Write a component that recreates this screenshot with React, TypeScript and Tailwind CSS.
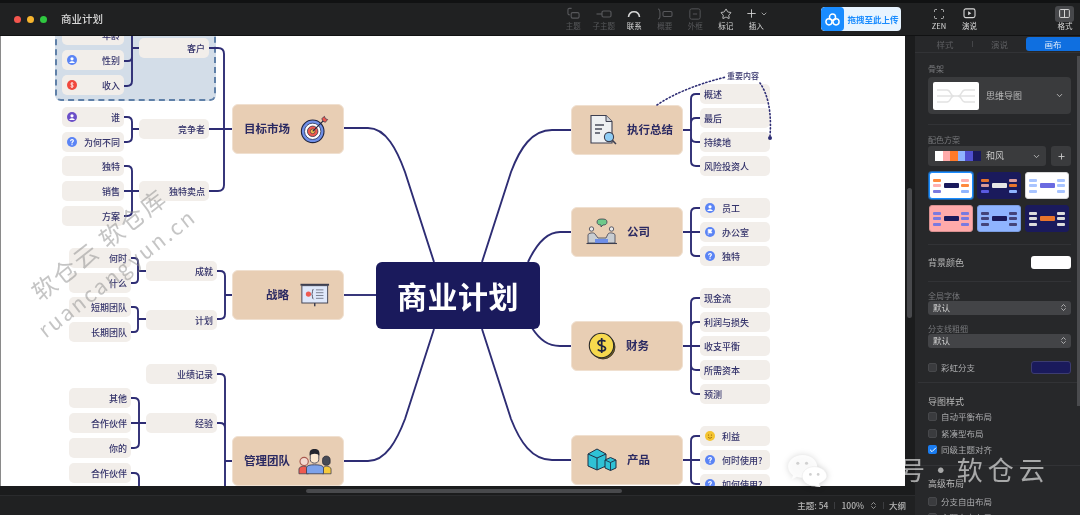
import React from 'react';
import { Star, Plus, ChevronDown, Scan, ChevronsUpDown, Check } from 'lucide-react';

const INK = '#2e2d74';

function Spot({ kind }: { kind: 'user' | 'ask' | 'money' | 'flag' | 'smile' | 'who' }) {
  const fill = { user: '#5b84f5', ask: '#5b84f5', money: '#f0483e', flag: '#5b84f5', smile: '#f4c430', who: '#6b4fc8' }[kind];
  return (
    <svg viewBox="0 0 10 10" className="w-[10px] h-[10px] shrink-0">
      <circle cx="5" cy="5" r="5" fill={fill} />
      {(kind === 'user' || kind === 'who') && (
        <>
          <circle cx="5" cy="3.8" r="1.6" fill="#fff" />
          <path d="M2.2 8 C2.6 5.8 7.4 5.8 7.8 8 Z" fill="#fff" />
        </>
      )}
      {kind === 'ask' && <path d="M3.6 3.8 C3.8 2.2 6.4 2.2 6.4 3.8 C6.4 4.8 5 4.8 5 6 M5 7.3 V7.8" stroke="#fff" strokeWidth="1.1" fill="none" strokeLinecap="round" />}
      {kind === 'money' && <path d="M6.4 3.4 C5.6 2.6 3.8 2.8 3.8 4 C3.8 5.3 6.3 4.8 6.3 6.1 C6.3 7.3 4.3 7.4 3.6 6.6 M5 2.2 V7.9" stroke="#fff" strokeWidth="0.8" fill="none" />}
      {kind === 'flag' && <path d="M3.2 2.6 H7 L6 4.3 L7 6 H3.8 Z M3.2 2.6 V8" fill="#fff" stroke="#fff" strokeWidth="0.6" />}
      {kind === 'smile' && (
        <>
          <circle cx="3.5" cy="4" r="0.6" fill="#8a5a00" />
          <circle cx="6.5" cy="4" r="0.6" fill="#8a5a00" />
          <path d="M3 6 C4 7.6 6 7.6 7 6" stroke="#8a5a00" strokeWidth="0.7" fill="none" />
        </>
      )}
    </svg>
  );
}

function Leaf({ text, w, right, icon }: { text?: string; w: string; right?: boolean; icon?: React.ComponentProps<typeof Spot>['kind'] }) {
  return (
    <div className={`${w} h-[20px] shrink-0 rounded-[5px] bg-[#f2eeea] flex items-center text-[9px] font-medium text-[#33326a] ${right ? (icon ? 'pl-[5px]' : 'pl-[4px]') : 'pl-[5px] pr-[4px]'}`}>
      {icon && <Spot kind={icon} />}
      <span className={`${right ? (icon ? 'ml-[7px]' : '') : 'ml-auto'} whitespace-nowrap leading-none`}>{text}</span>
    </div>
  );
}

function Main({ text, className, children, iconFirst }: { text: string; className: string; children: React.ReactNode; iconFirst?: boolean }) {
  return (
    <div className={`absolute w-[112px] h-[50px] rounded-[6px] bg-[#e8ceb4] border border-[#f0e0d0] flex items-center text-[11.5px] font-bold text-[#2b2a62] ${className}`}>
      {iconFirst ? children : null}
      <span className="whitespace-nowrap">{text}</span>
      {iconFirst ? null : children}
    </div>
  );
}

function Lines() {
  return (
    <svg viewBox="1 36 904 450" className="absolute inset-0 w-[904px] h-[450px]" fill="none" stroke={INK} strokeWidth="1.9">
      {/* center */}
      <path d="M344 128 H368 C386 128 397 150 405 172 L434 262" />
      <path d="M482 262 L511 172 C520 148 532 130 552 130 H571" />
      <path d="M528 262 C536 245 546 232 560 232 H571" />
      <path d="M532 328 C540 340 548 346 560 346 H571" />
      <path d="M344 295 H376" />
      <path d="M344 461 H368 C386 461 397 440 405 419 L434 329" />
      <path d="M482 329 L511 419 C520 442 532 460 552 460 H571" />
      {/* right side */}
      <path d="M683 130 H691 M700 94 H696 Q691 94 691 99 V161 Q691 166 696 166 H700 M700 118 H696 Q691 118 691 123 M700 142 H696 Q691 142 691 137" />
      <path d="M683 232 H700 M700 208 H696 Q691 208 691 213 V251 Q691 256 696 256 H700" />
      <path d="M683 346 H700 M700 298 H696 Q691 298 691 303 V389 Q691 394 696 394 H700 M700 322 H696 Q691 322 691 327 M700 370 H696 Q691 370 691 365" />
      <path d="M683 460 H700 M700 436 H696 Q691 436 691 441 V479 Q691 484 696 484 H700" />
      {/* left side */}
      <path d="M209 48 H218 Q224 48 224 54 V185 Q224 191 218 191 H209 M209 129 H232" />
      <path d="M132 48 H139 M123 61 H128 Q132 61 132 57 M123 86 H127 Q132 86 132 81 V36" />
      <path d="M123 117 H127 Q132 117 132 122 V137 Q132 142 127 142 H123 M132 129 H139" />
      <path d="M123 166 H127 Q132 166 132 171 V211 Q132 216 127 216 H123 M123 191 H139" />
      <path d="M216 271 H220 Q225 271 225 276 V314 Q225 319 220 319 H216 M225 295 H232" />
      <path d="M130 258 H134 Q138 258 138 262 V279 Q138 283 134 283 H130 M138 271 H146" />
      <path d="M130 307 H134 Q138 307 138 311 V328 Q138 332 134 332 H130 M138 319 H146" />
      <path d="M216 374 H220 Q225 374 225 379 V486 M216 423 H220 Q225 423 225 428 M225 461 H232" />
      <path d="M130 398 H134 Q139 398 139 403 V443 Q139 448 134 448 H130 M130 423 H146 M130 473 H134 Q139 473 139 478 V486" />
    </svg>
  );
}

// dotted callout runs over the leaves, so it sits in its own layer
function Callout() {
  return (
    <svg viewBox="1 36 904 450" className="absolute inset-0 w-[904px] h-[450px]" fill="none" stroke={INK}>
      <path d="M657 105 C670 96 693 85 726 77 M760 83 C767 93 772 110 770 136" strokeWidth="1.6" strokeDasharray="1.2 2.4" strokeLinecap="round" />
      <circle cx="770" cy="138" r="2" fill={INK} stroke="none" />
    </svg>
  );
}

function TargetIcon() {
  return (
    <svg viewBox="0 0 32 32" className="w-[29px] h-[29px] shrink-0">
      <circle cx="14" cy="18" r="12.5" fill="#6f8fe8" stroke="#1f2440" strokeWidth="1.2" />
      <circle cx="14" cy="18" r="9" fill="#fff" stroke="#1f2440" strokeWidth="0.8" />
      <circle cx="14" cy="18" r="5.8" fill="#ef5a50" stroke="#1f2440" strokeWidth="0.8" />
      <circle cx="14" cy="18" r="2.6" fill="#f2c14e" stroke="#1f2440" strokeWidth="0.6" />
      <path d="M14 18 L27 5" stroke="#1f2440" strokeWidth="1.2" />
      <path d="M24 4 L27 1.5 L28 4 L30.5 5 L28 8 L25.5 7 Z" fill="#ef5a50" stroke="#1f2440" strokeWidth="0.7" />
    </svg>
  );
}

function DocIcon() {
  return (
    <svg viewBox="0 0 28 32" className="w-[28px] h-[32px] shrink-0">
      <path d="M2 1.5 H17 L23 7.5 V29 H2 Z" fill="#eef0f2" stroke="#3d3f50" strokeWidth="1.1" />
      <path d="M17 1.5 V7.5 H23" fill="#cfd3d8" stroke="#3d3f50" strokeWidth="1" />
      <path d="M6 11 H15 M6 15 H13 M6 19 H11" stroke="#4a4c5c" strokeWidth="1.3" />
      <circle cx="20" cy="23" r="4.6" fill="#8fcdf5" stroke="#3d3f50" strokeWidth="1.1" />
      <path d="M23.4 26.4 L27 30" stroke="#3d3f50" strokeWidth="1.5" />
    </svg>
  );
}

function MeetIcon() {
  return (
    <svg viewBox="0 0 32 28" className="w-[32px] h-[28px] shrink-0">
      <path d="M11 4 C11 1.5 13 1 16 1 C19 1 21 1.5 21 4 C21 6.5 19 7 17 7 L15 9 L15 7 C13 7 11 6.5 11 4 Z" fill="#6fc98a" stroke="#3d3f50" strokeWidth="0.8" />
      <circle cx="5.5" cy="11" r="2.2" fill="#e8e8e8" stroke="#3d3f50" strokeWidth="0.8" />
      <circle cx="25.5" cy="11" r="2.2" fill="#e8e8e8" stroke="#3d3f50" strokeWidth="0.8" />
      <path d="M2 25 V17 C2 15 8 14 9 16 L12 20 H20 L22 16 C23 14 29 15 29 17 V25 Z" fill="#c9cdd2" stroke="#3d3f50" strokeWidth="0.8" />
      <rect x="9" y="21" width="13" height="4" fill="#6f8fe8" />
      <path d="M0.5 25.5 H31" stroke="#3d3f50" strokeWidth="1.1" />
    </svg>
  );
}

function CoinIcon() {
  return (
    <svg viewBox="0 0 28 28" className="w-[28px] h-[28px] shrink-0">
      <circle cx="15" cy="15" r="12" fill="#7a6420" stroke="#2a2a2a" strokeWidth="0.8" />
      <circle cx="13.5" cy="13.5" r="12.2" fill="#f6d94e" stroke="#2a2a2a" strokeWidth="1.1" />
      <path d="M17.5 9.5 C16 7.6 10 8 10 11 C10 14.5 17.5 13 17.5 16.5 C17.5 19.5 11.5 19.8 9.8 17.6 M13.7 6 V21" fill="none" stroke="#1f2440" strokeWidth="1.7" />
    </svg>
  );
}

function CubesIcon() {
  return (
    <svg viewBox="0 0 30 24" className="w-[30px] h-[24px] shrink-0">
      <path d="M1 6 L10 1 L19 6 L19 18 L10 22 L1 18 Z" fill="#2fc2d6" stroke="#1f2f45" strokeWidth="1" />
      <path d="M1 6 L10 10 L19 6 M10 10 V22" fill="none" stroke="#1f2f45" strokeWidth="1" />
      <path d="M18 12 L23.5 9.5 L29 12 L29 20 L23.5 22.5 L18 20 Z" fill="#2fc2d6" stroke="#1f2f45" strokeWidth="1" />
      <path d="M18 12 L23.5 14.5 L29 12 M23.5 14.5 V22.5" fill="none" stroke="#1f2f45" strokeWidth="0.9" />
    </svg>
  );
}

function BoardIcon() {
  return (
    <svg viewBox="0 0 32 26" className="w-[30px] h-[25px] shrink-0">
      <path d="M0.5 1.5 H31" stroke="#3d3f50" strokeWidth="2" />
      <rect x="2" y="2.5" width="27.5" height="18.5" fill="#dfe8fb" stroke="#3d3f50" strokeWidth="1" />
      <circle cx="9" cy="11.5" r="2.8" fill="#ef5a50" />
      <path d="M14.5 6 C13 6 13.5 11.5 12.5 11.5 C13.5 11.5 13 17 14.5 17" fill="none" stroke="#3d3f50" strokeWidth="0.9" />
      <path d="M17 7 H25 M17 10 H25 M17 13 H25 M17 16 H25" stroke="#6b6f80" strokeWidth="0.9" />
      <path d="M15.7 21 V24.5" stroke="#3d3f50" strokeWidth="1.6" />
    </svg>
  );
}

function PeopleIcon() {
  return (
    <svg viewBox="0 0 36 28" className="w-[34px] h-[27px] shrink-0">
      <path d="M1 27 V22 C1 20 4 19 6 19 C8 19 11 20 11 22 V27 Z" fill="#ef5a50" stroke="#3d3f50" strokeWidth="0.8" />
      <circle cx="6.5" cy="14" r="4.4" fill="#f3d9cf" stroke="#a85a50" strokeWidth="1.2" />
      <path d="M26 27 V22 C26 20 29 19 30 19 C32 19 35 20 35 22 V27 Z" fill="#f5c93c" stroke="#3d3f50" strokeWidth="0.8" />
      <path d="M26 12 C26 7 34 7 34 12 V15 C34 19 26 19 26 15 Z" fill="#474a55" stroke="#2a2c35" strokeWidth="0.8" />
      <path d="M9 27 V21 C9 18 13 17.5 17.5 17.5 C22 17.5 27 18 27 21 V27 Z" fill="#7da2ea" stroke="#3d3f50" strokeWidth="0.9" />
      <path d="M13 6 C13 3 22 3 22 6 V12 C22 17 13 17 13 12 Z" fill="#fbe7cf" stroke="#3d3f50" strokeWidth="0.9" />
      <path d="M12.5 8 C11.5 2 14 0.8 17.5 0.8 C21 0.8 23.5 2 22.5 8 C21.5 5 14 5 12.5 8 Z" fill="#23252e" />
    </svg>
  );
}

function Canvas() {
  return (
    <div className="relative w-[904px] h-[450px] bg-white overflow-hidden">
      {/* dashed group round the customer branch */}
      <div className="absolute left-[54px] top-[-10px] w-[161px] h-[75px] rounded-[6px] border-2 border-dashed border-[#5f80a8] bg-[#d3dde8]" />
      <Lines />

      <div className="absolute left-[375px] top-[226px] w-[164px] h-[67px] rounded-[6px] bg-[#1a1a5c] flex items-center justify-center text-[30px] font-bold text-white tracking-[0.5px]">商业计划</div>

      <Main text="目标市场" className="left-[231px] top-[68px] pl-[11px] gap-[10px]"><TargetIcon /></Main>
      <Main text="战略" className="left-[231px] top-[234px] pl-[33px] gap-[11px]"><BoardIcon /></Main>
      <Main text="管理团队" className="left-[231px] top-[400px] pl-[11px] gap-[8px]"><PeopleIcon /></Main>

      <Main iconFirst text="执行总结" className="left-[570px] top-[69px] pl-[17px] gap-[10px]"><DocIcon /></Main>
      <Main iconFirst text="公司" className="left-[570px] top-[171px] pl-[14px] gap-[9px]"><MeetIcon /></Main>
      <Main iconFirst text="财务" className="left-[570px] top-[285px] pl-[16px] gap-[10px]"><CoinIcon /></Main>
      <Main iconFirst text="产品" className="left-[570px] top-[399px] pl-[15px] gap-[10px]"><CubesIcon /></Main>

      {/* right leaves */}
      <div className="absolute left-[699px] top-[48px] flex flex-col gap-[4px]">
        {['概述', '最后', '持续地', '风险投资人'].map(t => <Leaf key={t} text={t} w="w-[70px]" right />)}
      </div>
      <div className="absolute left-[699px] top-[162px] flex flex-col gap-[4px]">
        <Leaf text="员工" w="w-[70px]" right icon="user" />
        <Leaf text="办公室" w="w-[70px]" right icon="flag" />
        <Leaf text="独特" w="w-[70px]" right icon="ask" />
      </div>
      <div className="absolute left-[699px] top-[252px] flex flex-col gap-[4px]">
        {['现金流', '利润与损失', '收支平衡', '所需资本', '预测'].map(t => <Leaf key={t} text={t} w="w-[70px]" right />)}
      </div>
      <div className="absolute left-[699px] top-[390px] flex flex-col gap-[4px]">
        <Leaf text="利益" w="w-[70px]" right icon="smile" />
        <Leaf text="何时使用?" w="w-[70px]" right icon="ask" />
        <Leaf text="如何使用?" w="w-[70px]" right icon="ask" />
      </div>
      <div className="absolute left-[726px] top-[36px] text-[8px] font-medium leading-none text-[#33326a] whitespace-nowrap">重要内容</div>

      {/* left, second level */}
      <div className="absolute left-[138px] top-[2px]"><Leaf text="客户" w="w-[70px]" /></div>
      <div className="absolute left-[138px] top-[83px]"><Leaf text="竞争者" w="w-[70px]" /></div>
      <div className="absolute left-[138px] top-[145px]"><Leaf text="独特卖点" w="w-[70px]" /></div>
      <div className="absolute left-[145px] top-[225px] flex flex-col gap-[29px]">
        <Leaf text="成就" w="w-[71px]" />
        <Leaf text="计划" w="w-[71px]" />
      </div>
      <div className="absolute left-[145px] top-[328px] flex flex-col gap-[29px]">
        <Leaf text="业绩记录" w="w-[71px]" />
        <Leaf text="经验" w="w-[71px]" />
      </div>

      {/* left leaves */}
      <div className="absolute left-[61px] top-[-11px] flex flex-col gap-[5px]">
        <Leaf text="年龄" w="w-[62px]" />
        <Leaf text="性别" w="w-[62px]" icon="user" />
        <Leaf text="收入" w="w-[62px]" icon="money" />
      </div>
      <div className="absolute left-[61px] top-[71px] flex flex-col gap-[5px]">
        <Leaf text="谁" w="w-[62px]" icon="who" />
        <Leaf text="为何不同" w="w-[62px]" icon="ask" />
      </div>
      <div className="absolute left-[61px] top-[120px] flex flex-col gap-[5px]">
        <Leaf text="独特" w="w-[62px]" />
        <Leaf text="销售" w="w-[62px]" />
        <Leaf text="方案" w="w-[62px]" />
      </div>
      <div className="absolute left-[68px] top-[212px] flex flex-col gap-[5px]">
        <Leaf text="何时" w="w-[62px]" />
        <Leaf text="什么" w="w-[62px]" />
      </div>
      <div className="absolute left-[68px] top-[261px] flex flex-col gap-[5px]">
        <Leaf text="短期团队" w="w-[62px]" />
        <Leaf text="长期团队" w="w-[62px]" />
      </div>
      <div className="absolute left-[68px] top-[352px] flex flex-col gap-[5px]">
        <Leaf text="其他" w="w-[62px]" />
        <Leaf text="合作伙伴" w="w-[62px]" />
        <Leaf text="你的" w="w-[62px]" />
        <Leaf text="合作伙伴" w="w-[62px]" />
      </div>

      <Callout />

      {/* watermark */}
      <div className="absolute left-[16px] top-[196px] -rotate-[38deg] text-[24px] tracking-[2px] text-[#8c8c8c]/50 whitespace-nowrap leading-none">软仓云 软仓库</div>
      <div className="absolute left-[19px] top-[226px] -rotate-[38deg] text-[21px] tracking-[2.5px] text-[#8c8c8c]/50 whitespace-nowrap leading-none">ruancangyun.cn</div>
    </div>
  );
}

function Tool({ label, dim, children }: { label: string; dim?: boolean; children: React.ReactNode }) {
  return (
    <div className={`w-[30.5px] pb-[2px] flex flex-col items-center ${dim ? 'text-[#57585b]' : 'text-[#d8d8d8]'}`}>
      <div className="h-[16px] flex items-center justify-center">{children}</div>
      <span className="-mt-[1px] text-[7.5px] leading-[10px] whitespace-nowrap">{label}</span>
    </div>
  );
}

function TopBar() {
  return (
    <header className="h-[36px] shrink-0 border-t-[3px] border-[#111213] border-b border-b-[#111213] bg-[#202122] flex items-center">
      <div className="ml-[14px] flex gap-[6px]">
        <span className="w-[7px] h-[7px] rounded-full bg-[#f4564e]" />
        <span className="w-[7px] h-[7px] rounded-full bg-[#f7b52e]" />
        <span className="w-[7px] h-[7px] rounded-full bg-[#2fc840]" />
      </div>
      <span className="ml-[14px] text-[10.5px] font-medium text-[#d8d8d8] whitespace-nowrap">商业计划</span>
      <div className="ml-[455px] flex items-center">
        <Tool dim label="主题">
          <svg viewBox="0 0 14 14" className="w-[13px] h-[13px]" fill="none" stroke="currentColor" strokeWidth="1.2"><path d="M5 1.5 H2.5 Q1 1.5 1 3 V7 Q1 8.5 3 8.5" /><rect x="4.5" y="6" width="8.5" height="6" rx="1.5" /></svg>
        </Tool>
        <Tool dim label="子主题">
          <svg viewBox="0 0 16 10" className="w-[16px] h-[10px]" fill="none" stroke="currentColor" strokeWidth="1.2"><path d="M0.5 5 H6" /><rect x="6" y="2" width="9" height="6" rx="1.5" /></svg>
        </Tool>
        <Tool label="联系">
          <svg viewBox="0 0 14 10" className="w-[14px] h-[10px]" fill="none" stroke="currentColor" strokeWidth="1.6"><path d="M1.5 8 C2.5 1 11.5 1 12.5 8" /></svg>
        </Tool>
        <Tool dim label="概要">
          <svg viewBox="0 0 16 12" className="w-[16px] h-[12px]" fill="none" stroke="currentColor" strokeWidth="1.1"><path d="M1 1 C3 1 3 3 3 6 C3 9 3 11 1 11" /><rect x="6" y="3.5" width="9" height="5" rx="1.2" /></svg>
        </Tool>
        <Tool dim label="外框">
          <svg viewBox="0 0 14 14" className="w-[12px] h-[12px]" fill="none" stroke="currentColor" strokeWidth="1.1"><rect x="1" y="1" width="12" height="12" rx="2" /><path d="M4.5 7 H9.5" /></svg>
        </Tool>
        <Tool label="标记"><Star size={12} strokeWidth={1.7} /></Tool>
        <Tool label="插入">
          <span className="flex items-center"><Plus size={13} strokeWidth={1.6} /><ChevronDown size={8} strokeWidth={2} className="ml-[2px]" /></span>
        </Tool>
      </div>
      <div className="ml-[49px] w-[81px] h-[24px] rounded-[4px] bg-[#e8f4ff] flex items-center overflow-hidden">
        <div className="w-[23px] h-full bg-[#1a8cff] rounded-[4px] flex items-center justify-center">
          <svg viewBox="0 0 16 14" className="w-[15px] h-[13px]" fill="none" stroke="#fff" strokeWidth="1.6"><circle cx="8" cy="4.5" r="3.3" /><circle cx="4.2" cy="9.5" r="3.3" /><circle cx="11.8" cy="9.5" r="3.3" /></svg>
        </div>
        <span className="ml-[4px] text-[8.5px] font-bold text-[#1a8cff] whitespace-nowrap">拖拽至此上传</span>
      </div>
      <div className="ml-[23px] flex items-center">
        <Tool label="ZEN"><Scan size={12} strokeWidth={1.6} /></Tool>
        <Tool label="演说">
          <svg viewBox="0 0 14 12" className="w-[13px] h-[11px]"><rect x="1" y="1" width="12" height="9.5" rx="2" fill="none" stroke="currentColor" strokeWidth="1.2" /><path d="M5.5 3.6 L9 5.75 L5.5 7.9 Z" fill="currentColor" /></svg>
        </Tool>
      </div>
      <div className="ml-[65px] w-[30.5px] pb-[2px] flex flex-col items-center text-[#d8d8d8]">
        <div className="w-[19px] h-[16px] rounded-[3px] bg-[#47484b] flex items-center justify-center">
          <svg viewBox="0 0 12 10" className="w-[11px] h-[9px]" fill="none" stroke="currentColor" strokeWidth="1.1"><rect x="0.6" y="0.6" width="10.8" height="8.8" rx="1" /><path d="M6 0.6 V9.4" /></svg>
        </div>
        <span className="-mt-[1px] text-[7.5px] leading-[10px] whitespace-nowrap">格式</span>
      </div>
    </header>
  );
}

function Thumb({ bg, mid, left, right, ring }: { bg: string; mid: string; left: string[]; right: string[]; ring: string }) {
  return (
    <div className={`w-[44px] h-[27px] rounded-[3px] border ${ring} ${bg} flex items-center justify-between px-[3px]`}>
      <div className="flex flex-col gap-[2.5px]">
        {left.map((c, i) => <span key={i} className={`block w-[8px] h-[3px] rounded-[1px] ${c}`} />)}
      </div>
      <span className={`block w-[15px] h-[5px] rounded-[1px] ${mid}`} />
      <div className="flex flex-col gap-[2.5px]">
        {right.map((c, i) => <span key={i} className={`block w-[8px] h-[3px] rounded-[1px] ${c}`} />)}
      </div>
    </div>
  );
}

function Label({ children, className = '' }: { children: React.ReactNode; className?: string }) {
  return <div className={`text-[8px] leading-[10px] text-[#77787b] ${className}`}>{children}</div>;
}

function Pick({ className = '' }: { className?: string }) {
  return (
    <div className={`h-[14px] rounded-[3px] bg-[#434447] flex items-center justify-between pl-[5px] pr-[3px] text-[8.5px] text-[#cfcfcf] ${className}`}>
      默认<ChevronsUpDown size={9} strokeWidth={2} />
    </div>
  );
}

function Tick({ text, on }: { text: string; on?: boolean }) {
  return (
    <div className="h-[16.5px] flex items-center gap-[4px] text-[8.5px] text-[#a9aaac] whitespace-nowrap">
      <span className={`w-[9px] h-[9px] rounded-[2px] flex items-center justify-center ${on ? 'bg-[#1a7cf0]' : 'bg-[#3a3b3e] border border-[#47484b]'}`}>
        {on && <Check size={8} strokeWidth={3} className="text-white" />}
      </span>
      {text}
    </div>
  );
}

function Panel() {
  return (
    <aside className="relative w-[165px] shrink-0 h-[479px] overflow-hidden bg-[#27282a]">
      <div className="h-[17px] flex items-center border-b border-[#323336] text-[8.5px] text-[#5e5f62]">
        <span className="w-[57px] text-center pl-[3px]">样式</span>
        <span className="w-px h-[6px] bg-[#444548]" />
        <span className="w-[53px] text-center">演说</span>
        <span className="w-[54px] h-[14px] rounded-l-[3px] bg-[#0f6fe0] text-white/85 flex items-center justify-center">画布</span>
      </div>
      <div className="absolute right-0 top-[20px] w-[3px] h-[350px] bg-[#4a4b4e]" />

      <div className="pl-[13px] pr-[9px] pt-[11px]">
        <Label>骨架</Label>
        <div className="mt-[3px] h-[37px] rounded-[4px] bg-[#3a3b3d] flex items-center pl-[5px] pr-[7px]">
          <div className="w-[46px] h-[28px] rounded-[2px] bg-white flex items-center justify-center">
            <svg viewBox="0 0 46 28" className="w-[46px] h-[28px]" fill="none" stroke="#e2e2e2" strokeWidth="1.5"><path d="M4 8 H14 C18 8 17 14 21 14 H25 C29 14 28 8 32 8 H42 M4 14 H42 M4 20 H14 C18 20 17 14 21 14 M25 14 C29 14 28 20 32 20 H42" /></svg>
          </div>
          <span className="ml-[7px] text-[9px] text-[#b8b8b8] whitespace-nowrap">思维导图</span>
          <ChevronDown size={9} strokeWidth={2.2} className="ml-auto text-[#c8c8c8]" />
        </div>
        <div className="mt-[10px] h-px bg-[#323336]" />

        <Label className="mt-[10px]">配色方案</Label>
        <div className="mt-[1px] flex gap-[5px]">
          <div className="w-[118px] h-[20px] rounded-[3px] bg-[#3a3b3d] flex items-center pl-[7px] pr-[5px]">
            <div className="flex h-[10px]">
              <span className="w-[8px] bg-white" />
              <span className="w-[7px] bg-[#ffaaaa]" />
              <span className="w-[8px] bg-[#ff7a2a]" />
              <span className="w-[7px] bg-[#8fb4ff]" />
              <span className="w-[8px] bg-[#5050d0]" />
              <span className="w-[8px] bg-[#1a1a5c]" />
            </div>
            <span className="ml-[5px] text-[9px] text-[#c8c8c8]">和风</span>
            <ChevronDown size={9} strokeWidth={2.2} className="ml-auto text-[#c8c8c8]" />
          </div>
          <div className="w-[20px] h-[20px] rounded-[3px] bg-[#3a3b3d] flex items-center justify-center text-[#c8c8c8]"><Plus size={9} strokeWidth={2.4} /></div>
        </div>

        <div className="mt-[6px] grid grid-cols-[44px_44px_44px] gap-x-[4px] gap-y-[6px] ml-[1px]">
          <Thumb bg="bg-white" ring="border-[#1a8cff] ring-1 ring-[#1a8cff]/60" mid="bg-[#1a1a5c]" left={['bg-[#ff8a3c]', 'bg-[#ffb0b0]', 'bg-[#7a7ae0]']} right={['bg-[#ffb0b0]', 'bg-[#ff8a3c]', 'bg-[#8fb4ff]']} />
          <Thumb bg="bg-[#1a1a5c]" ring="border-[#1a1a5c]" mid="bg-[#e6e6e6]" left={['bg-[#e8742c]', 'bg-[#d89a9a]', 'bg-[#5a5ae0]']} right={['bg-[#d89a9a]', 'bg-[#e8742c]', 'bg-[#8fb4ff]']} />
          <Thumb bg="bg-white" ring="border-[#d8d8d8]" mid="bg-[#6a6ae0]" left={['bg-[#a8c4ff]', 'bg-[#a8c4ff]', 'bg-[#a8c4ff]']} right={['bg-[#a8c4ff]', 'bg-[#a8c4ff]', 'bg-[#a8c4ff]']} />
          <Thumb bg="bg-[#ffaaaa]" ring="border-[#d89090]" mid="bg-[#1a1a5c]" left={['bg-[#7a7ae0]', 'bg-[#7a7ae0]', 'bg-[#7a7ae0]']} right={['bg-[#7a7ae0]', 'bg-[#7a7ae0]', 'bg-[#7a7ae0]']} />
          <Thumb bg="bg-[#8fb4ff]" ring="border-[#7a9ce0]" mid="bg-[#1a1a5c]" left={['bg-[#44447a]', 'bg-[#44447a]', 'bg-[#44447a]']} right={['bg-[#44447a]', 'bg-[#44447a]', 'bg-[#44447a]']} />
          <Thumb bg="bg-[#1a1a5c]" ring="border-[#1a1a5c]" mid="bg-[#e8742c]" left={['bg-[#dcdcdc]', 'bg-[#dcdcdc]', 'bg-[#dcdcdc]']} right={['bg-[#dcdcdc]', 'bg-[#dcdcdc]', 'bg-[#dcdcdc]']} />
        </div>
        <div className="mt-[12px] h-px bg-[#323336]" />

        <div className="mt-[11px] flex items-center justify-between">
          <span className="text-[9px] text-[#b8b8b8]">背景颜色</span>
          <span className="w-[40px] h-[13px] rounded-[3px] bg-white" />
        </div>
        <div className="mt-[11px] h-px bg-[#323336]" />

        <Label className="mt-[9px]">全局字体</Label>
        <Pick />
        <Label className="mt-[9px]">分支线粗细</Label>
        <Pick />
        <div className="mt-[13px] flex items-center justify-between">
          <span className="flex items-center gap-[4px] text-[8.5px] text-[#a9aaac]">
            <span className="w-[9px] h-[9px] rounded-[2px] bg-[#3a3b3e] border border-[#47484b]" />彩虹分支
          </span>
          <span className="w-[40px] h-[13px] rounded-[3px] bg-[#1a1a5c] border border-[#3c3c70]" />
        </div>
      </div>
      <div className="mt-[8px] ml-[3px] h-px bg-[#323336]" />

      <div className="pl-[13px] pr-[9px] pt-[13px]">
        <div className="text-[9px] leading-[11px] text-[#b8b8b8] mb-[2px]">导图样式</div>
        <Tick text="自动平衡布局" />
        <Tick text="紧凑型布局" />
        <Tick text="同级主题对齐" on />
      </div>
      <div className="mt-[7px] ml-[3px] h-px bg-[#323336]" />

      <div className="pl-[13px] pr-[9px] pt-[12px]">
        <div className="text-[9px] leading-[11px] text-[#b8b8b8] mb-[4px]">高级布局</div>
        <Tick text="分支自由布局" />
        <Tick text="主题自由布局" />
      </div>
    </aside>
  );
}

function StatusBar() {
  return (
    <footer className="h-[29px] shrink-0 bg-[#202122] flex flex-col">
      <div className="h-[9px] bg-[#1b1c1d] flex items-center pl-[306px]">
        <span className="w-[316px] h-[4px] rounded-full bg-[#48494c]" />
      </div>
      <div className="flex-1 border-t border-[#2a2b2d] flex items-center justify-end pr-[9px] text-[8.5px] font-medium text-[#b5b5b5] whitespace-nowrap">
        <span>主题: 54</span>
        <span className="mx-[6px] w-px h-[7px] bg-[#3c3d40]" />
        <span>100%</span>
        <ChevronsUpDown size={9} strokeWidth={2} className="ml-[5px]" />
        <span className="mx-[5px] w-px h-[7px] bg-[#3c3d40]" />
        <span>大纲</span>
      </div>
    </footer>
  );
}

export default function App() {
  return (
    <div className="relative w-[1080px] h-[515px] overflow-hidden bg-[#1b1c1d] blur-[0.4px] font-['Noto_Sans_CJK_SC','Noto_Sans',sans-serif]">
      <TopBar />
      <div className="flex">
        <div className="w-[915px] shrink-0 flex flex-col">
          <div className="flex">
            <div className="w-px bg-[#8a8a8a]" />
            <Canvas />
            <div className="w-[10px] bg-[#1b1c1d] pl-[2px] pt-[152px]">
              <div className="w-[5px] h-[130px] rounded-full bg-[#48494c]" />
            </div>
          </div>
          <StatusBar />
        </div>
        <Panel />
      </div>

      {/* repost watermark */}
      <div className="absolute left-[787px] top-[454px] flex items-center text-white/60">
        <svg viewBox="0 0 42 34" className="w-[41px] h-[33px] drop-shadow-[0_0_3px_rgba(0,0,0,0.18)]">
          <path d="M16 1 C7.5 1 1 6.5 1 13 C1 17 3.2 20 6 22 L5 26 L10 23.5 C12 24.2 14 24.5 16 24.5 C25 24.5 31 19 31 13 C31 6.5 24.5 1 16 1 Z" fill="#fff" fillOpacity="0.85" />
          <path d="M28 13 C21 13 15.5 17.5 15.5 23 C15.5 28.5 21 33 28 33 L34 34 L33 30.5 C37 28.5 41 26 41 23 C41 17.5 35 13 28 13 Z" fill="#fff" stroke="#e5e5e5" strokeWidth="0.6" />
          <circle cx="11" cy="9.5" r="1.6" fill="#d0d0d0" /><circle cx="20" cy="9.5" r="1.6" fill="#d0d0d0" />
          <circle cx="24" cy="21" r="1.4" fill="#d0d0d0" /><circle cx="32" cy="21" r="1.4" fill="#d0d0d0" />
        </svg>
        <span className="ml-[9px] -mt-[3px] text-[26px] leading-none tracking-[5px] whitespace-nowrap [word-spacing:-13px]">公众号 · 软仓云</span>
      </div>
    </div>
  );
}
